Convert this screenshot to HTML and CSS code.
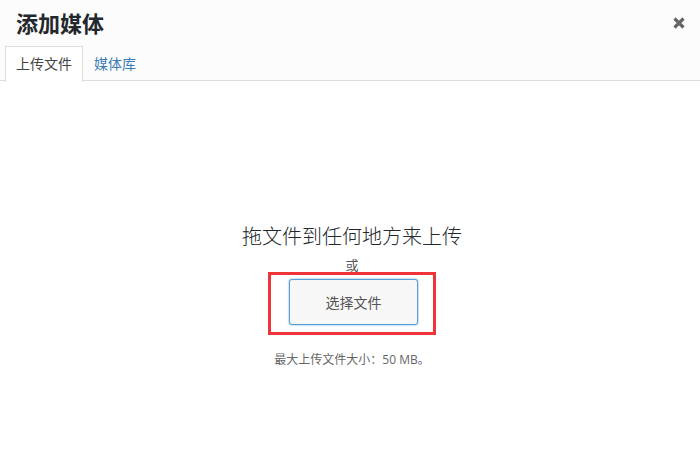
FILE: index.html
```html
<!DOCTYPE html>
<html lang="zh-CN">
<head>
<meta charset="utf-8">
<title>添加媒体</title>
<link rel="stylesheet" href="styles.css">
</head>
<body>
<div class="modal">
  <header class="head">
    <div class="title-row">
      <h1 class="title">添加媒体</h1>
      <button class="close" aria-label="关闭">
        <svg width="12" height="12" viewBox="0 0 12 12"><path d="M1.5 1.5 L10.5 10.5 M10.5 1.5 L1.5 10.5" stroke="#666" stroke-width="3.2" stroke-linecap="butt" fill="none"/></svg>
      </button>
    </div>
    <nav class="tabs">
      <a class="tab active">上传文件</a>
      <a class="tab">媒体库</a>
    </nav>
  </header>
  <main class="content">
    <p class="drop">拖文件到任何地方来上传</p>
    <p class="or">或</p>
    <div class="highlight">
      <button class="select">选择文件</button>
    </div>
    <p class="max">最大上传文件大小<span class="colon">：</span>50 MB。</p>
  </main>
</div>
</body>
</html>
```
FILE: styles.css
```css
html, body {
  margin: 0;
  padding: 0;
  background: #fff;
}
body {
  font-family: "Open Sans", "Noto Sans CJK SC", sans-serif;
  color: #23282d;
  width: 700px;
  height: 462px;
  overflow: hidden;
}
.modal {
  display: flex;
  flex-direction: column;
  height: 462px;
}
.head {
  background: #fcfcfc;
  border-bottom: 1px solid #ddd;
  height: 81px;
  box-sizing: border-box;
  display: flex;
  flex-direction: column;
}
.title-row {
  height: 46px;
  display: flex;
  align-items: center;
  justify-content: space-between;
  padding: 0 15px 0 16px;
}
.title {
  margin: 0;
  font-size: 22px;
  font-weight: 700;
  line-height: 46px;
  color: #23282d;
}
.close {
  border: 0;
  background: none;
  padding: 0;
  width: 12px;
  height: 12px;
  display: flex;
}
.tabs {
  display: flex;
  padding-left: 5px;
  height: 35px;
}
.tab {
  font-size: 14px;
  line-height: 33px;
  padding: 0 10px;
  color: #3a7db5;
  border: 1px solid transparent;
  border-bottom: 0;
  height: 35px;
  box-sizing: border-box;
  text-decoration: none;
}
.tab.active {
  color: #444;
  background: #fff;
  border-color: #ddd;
  height: 36px;
  margin-bottom: -1px;
}
.content {
  flex: 1;
  display: flex;
  flex-direction: column;
  align-items: center;
  padding-left: 4px;
}
.drop {
  margin: 142px 0 0;
  font-size: 20px;
  font-weight: 300;
  line-height: 28px;
  color: #23282d;
}
.or {
  margin: 7px 0 0;
  font-size: 13px;
  line-height: 14px;
  color: #555;
}
.highlight {
  border: 3px solid #ee3339;
  padding: 4px 15px 7px 18px;
}
.select {
  display: block;
  width: 129px;
  height: 46px;
  box-sizing: border-box;
  border: 1px solid #5b9dd9;
  border-radius: 3px;
  background: #f7f7f7;
  box-shadow: 0 0 2px rgba(30, 140, 190, 0.8);
  font-family: "Open Sans", "Noto Sans CJK SC", sans-serif;
  font-size: 14px;
  color: #555;
  padding: 0;
}
.max {
  margin: 16px 0 0;
  font-size: 12px;
  line-height: 16px;
  color: #666;
}
.colon {
  font-family: "Noto Sans CJK TC", sans-serif;
}
```
